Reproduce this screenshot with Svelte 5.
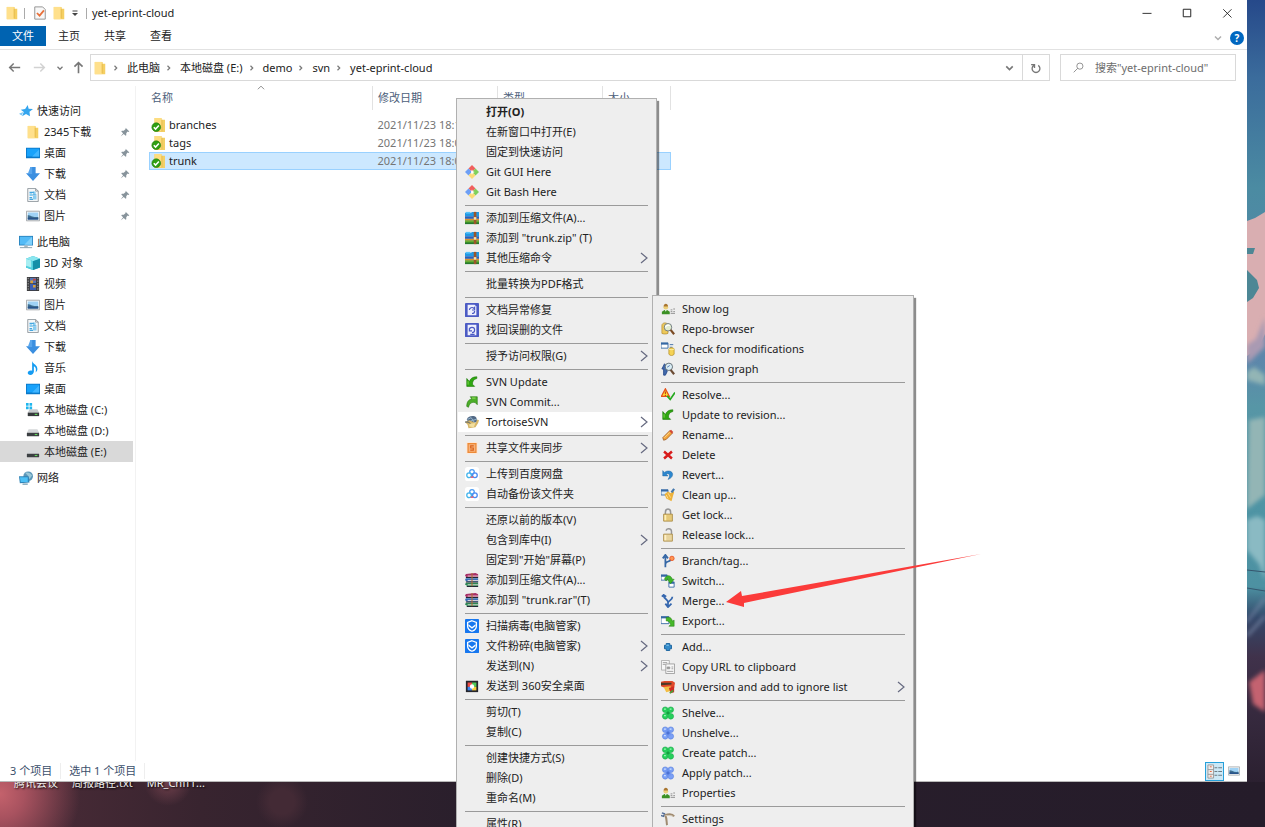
<script>
  // 16x16 glyphs, keyed by name
  const icons = {
    folder: '<path d="M2 1h9v2h3v12H2z" fill="#f5cf62"/><path d="M2 1h8v14H2z" fill="#ffe08c"/><path d="M10 3h1v11h-1z" fill="#e6ba4e"/>',
    svnFolder: '<path d="M4 0h8v2h4v14H4z" fill="#f3cf66"/><path d="M4 0h8v15H4z" fill="#fddd80"/><path d="M12 2h1v13h-1z" fill="#e6ba4e"/><circle cx="6" cy="10.500" r="5" fill="#2f9e12" stroke="#247d0d" stroke-width=".7"/><path d="M3.200 10.500l2 2.200 3.800-4.200" fill="none" stroke="#fff" stroke-width="1.700"/>',
    props: '<path d="M2 1h9l3 3v11H2z" fill="#f8f8f8" stroke="#8a8a8a"/><path d="M4.500 8l3 3 5-6" fill="none" stroke="#e8703a" stroke-width="2"/>',
    star: '<path d="M10 1l1 4.500 5 .3-4 3 .5 5.200-4.500-2.600L3.500 14l2-4.800L2 6.500l5-.7z" fill="#34a5ee"/><path d="M0 11l5-2-2 4z" fill="#7ac6f5"/>',
    desktop: '<path d="M0 2h16v12H0z" fill="#0a78c8"/><path d="M1 3h14v9H1z" fill="#18a2fb"/><path d="M7 12l8-8v8z" fill="#40b5ff"/>',
    download: '<path d="M5 0h6v7h5l-8 9-8-9h5z" fill="#3b8fe0"/><path d="M5 0h2v8H2z" fill="#58a5ec"/>',
    document: '<path d="M2 .5h9l3 3v12H2z" fill="#f5f7f8" stroke="#8c9499"/><path d="M11 .5v3h3" fill="none" stroke="#8c9499"/><path d="M4 6h3v3H4zM8 4h3v4H8zM8 9h4v4H8z" fill="#8acdf0"/><path d="M4 5h5M7 8h5M4 11h3M4 13h4" stroke="#46a6df" stroke-width="1.300"/>',
    picture: '<path d="M.5 2.500h15v11H.5z" fill="#f7f7f7" stroke="#9ba1a5"/><path d="M2 4h12v8H2z" fill="#9fd2f5"/><path d="M2 7c4 0 5 3 12 2v3H2z" fill="#3f6f8f"/><path d="M2 10c4-1 7 1 12 0v2H2z" fill="#28538a"/>',
    pc: '<path d="M0 1h16v11H0z" fill="#2882bd"/><path d="M1 2h14v9H1z" fill="#53bbf6"/><path d="M6 11L15 2v9z" fill="#7fd0fb"/><path d="M6 12h4v2H6z" fill="#a9b6bd"/><path d="M1 14h14v1H1z" fill="#7d97a5"/>',
    cube: '<path d="M8 0l8 3v10l-8 3-8-3V3z" fill="#27b5cd"/><path d="M8 0l8 3-8 3-8-3z" fill="#8be6ef"/><path d="M0 3l8 3v10l-8-3z" fill="#51cfdd"/><path d="M0 3l6 2v8l-6-2z" fill="#a8eef2"/><path d="M16 3L8 6v10l8-3z" fill="#1590a8"/>',
    film: '<path d="M1 0h14v16H1z" fill="#3d3d3f"/><path d="M2.500 1v14M13.500 1v14" stroke="#b5b5b5" stroke-dasharray="1.500 1.500"/><path d="M4.500 1h7v6h-7z" fill="#5677b8"/><path d="M4.500 8h7v7h-7z" fill="#3c5fb1"/><path d="M5 4h3v3H5zM8 9h3v3H8z" fill="#d8a13c"/><path d="M8 2h3v2H8z" fill="#ca4335"/>',
    music: '<path d="M7 0c1 4 6 4 6 9 0 2-1 3-2 4 1-4 0-6-2-7v6c0 2-2 4-4 4s-3-1-3-2.500S4 10 7 11z" fill="#159cf2"/>',
    drive: '<path d="M3 6h10l2 4H1z" fill="#d4d7d9"/><path d="M1 10h14v4H1z" fill="#3b3f42"/><path d="M10 12h3" stroke="#61d65c" stroke-width="1.300"/>',
    driveC: '<path d="M4 7h9l2 4H2z" fill="#c6cacc"/><path d="M2 11h13v4H2z" fill="#36393c"/><path d="M10 13h3" stroke="#61d65c" stroke-width="1.300"/><path d="M0 0h3v3H0zM4 0h3v3H4zM0 4h3v3H0zM4 4h3v3H4z" fill="#1fb6ee"/>',
    network: '<circle cx="10.500" cy="6" r="5.500" fill="#5c97b8"/><path d="M7 2c3-1 6 0 8 3l-3 4-2-4z" fill="#9ac7d7"/><path d="M0 6h11l1 7-11 1z" fill="#2f84b8"/><path d="M1 7h9v5.500H2z" fill="#4dc0f5"/><path d="M4 15h6" stroke="#6a98b0" stroke-width="1.400"/>',
    git: '<path d="M8 0l4 4-4 4-4-4z" fill="#f0605c"/><path d="M4 4l4 4-4 4-4-4z" fill="#6d9ff5"/><path d="M12 4l4 4-4 4-4-4z" fill="#7fd05c"/><path d="M8 8l4 4-4 4-4-4z" fill="#f9db76"/><path d="M8 5l1 2 2 1-2 1-1 2-1-2V7z" fill="#fff"/>',
    zip: '<path d="M0 2h7l1-1h8v5H0z" fill="#2199e4"/><path d="M1 1h5v2H1z" fill="#55c2fa"/><path d="M0 6h16v3H0z" fill="#2b62b9"/><path d="M0 9h16v2H0z" fill="#e0912d"/><path d="M0 11h16v4H0z" fill="#247a2c"/><path d="M0 11h16v2H0z" fill="#66ad30"/><path d="M10 1h3v14h-3z" fill="#9a562b"/><path d="M10 7h3v3h-3z" fill="#ffe3a8"/>',
    repair: '<rect width="16" height="16" rx="1" fill="#4c5bc4"/><path d="M3 2h8l2 2v10H3z" fill="#eef0fd"/><path d="M5 8a3 3 0 0 1 5-2l1-1v3H8M11 9a3 3 0 0 1-3 3" fill="none" stroke="#4c5bc4" stroke-width="1.300"/>',
    recover: '<rect width="16" height="16" rx="1" fill="#4c5bc4"/><path d="M3 2h10v12H3z" fill="#eef0fd"/><path d="M5 8a3 3 0 1 1 3 3M5 6v3h3M6 13h5" fill="none" stroke="#4c5bc4" stroke-width="1.300"/>',
    update: '<path d="M2 4v9h9L8.500 10.500C8.500 7 10 5 13.500 4V2C9 2 6 4 5 7.500z" fill="#30a711" stroke="#187607" stroke-width=".7"/><path d="M3.500 7v4" stroke="#85df55"/>',
    commit: '<path d="M2 13C2 8 4 5 8 4.500L6 2h8v9l-2.500-2.500C7 8 5 10 4 14z" fill="#4cae29" stroke="#217709" stroke-width=".7"/><path d="M8 3.500h4" stroke="#a4ed66"/>',
    tortoise: '<path d="M2 5c2-4 8-5 11-2l1 5-9 2z" fill="#526986"/><path d="M3 5l4-2 2 3 4-1M6 7l3-1 2 3" stroke="#9ec1d7" fill="none"/><path d="M0 8l5-2 7 3 2-4 2 1-1 3-3 5-8 1-1-4z" fill="#d6b668"/><path d="M5 10l7-1-2 5-5-1z" fill="#f3df9e"/><path d="M0 8l4 0 2 2" stroke="#38495f" fill="none"/>',
    share: '<rect x="1" y="1" width="14" height="14" rx="2" fill="#fbe9dc"/><path d="M3.500 3h9v10h-9z" fill="#f6b27c" stroke="#ed8a36" stroke-width="1.500"/><path d="M10 5.500H6.500V8H9.500v2.500H6" fill="none" stroke="#d9621a" stroke-width="1.300"/>',
    baidu: '<rect width="16" height="16" rx="3" fill="#fff"/><circle cx="8" cy="5.500" r="2.600" fill="none" stroke="#4b9df3" stroke-width="1.500"/><circle cx="4.700" cy="9.500" r="2.700" fill="none" stroke="#43b5ec" stroke-width="1.500"/><circle cx="11.300" cy="9.500" r="2.700" fill="none" stroke="#4b8cf3" stroke-width="1.500"/><path d="M6.500 11c1 1 2 1 3 0" stroke="#ef5362" stroke-width="1.500" fill="none"/>',
    rar: '<path d="M1 1l11-1 3 1.500V5H2L0 3z" fill="#a82f66"/><path d="M1 6h14v4H2L0 8z" fill="#366bb4"/><path d="M1 11h14v4H3l-3-2z" fill="#2d8754"/><path d="M3 3.500h12M3 8.500h12M3 13.500h12" stroke="#f4e6e6"/><path d="M1 5.200h14M1 10.200h14M2 15.400h13" stroke="#202733" stroke-width="1.200"/><path d="M7 0h2v15H7z" fill="#ad6b37" opacity=".6"/>',
    shield: '<rect width="16" height="16" rx="1" fill="#1777ef"/><path d="M8 2l5 2v4c0 3-2 5-5 6-3-1-5-3-5-6V4z" fill="none" stroke="#fff" stroke-width="1.500"/><path d="M4 6l4 3 4-3v2l-4 3-4-3z" fill="#fff"/>',
    desk360: '<path d="M1 2h14v13H1z" fill="#25252c"/><path d="M3 4h5v5H3z" fill="#f04a45"/><path d="M8 4h5v5H8z" fill="#50c856"/><path d="M3 9h5v4H3z" fill="#3c86f2"/><path d="M8 9h5v4H8z" fill="#f6cc3a"/><circle cx="8" cy="8.500" r="2.500" fill="#fff"/>',
    user: '<circle cx="5.500" cy="6" r="2.700" fill="#ecd07a"/><path d="M3 5c0-4 5-4 5 0z" fill="#a97630"/><path d="M1 14v-3l3-2h3l3 2v3z" fill="#3c9125"/><path d="M4.500 9l1 2 1-2z" fill="#fff"/><path d="M11 9h2M14 8h2M11 11h2M14 11h2M11 13h5" stroke="#888"/>',
    repo: '<path d="M1 4c0-4 7-4 7 0v9c-2 1-5 1-7 0z" fill="#edc95b" stroke="#a98222" stroke-width=".7"/><circle cx="8" cy="6" r="4.300" fill="#e3eccf" stroke="#68737b"/><path d="M11 9l4 5" stroke="#7b4b24" stroke-width="2.500"/><path d="M5 6c1-2 3-3 5-2" stroke="#fff" stroke-width="1.500" fill="none"/>',
    check: '<path d="M0 1h8v6H0z" fill="#fff" stroke="#3568a4"/><path d="M0 1h8v2H0z" fill="#3568a4"/><path d="M10 3h4M10 6h3" stroke="#3568a4"/><path d="M9 8c0-2 6-2 6 0v6c-2 2-4 2-6 0z" fill="#f5d255" stroke="#b28b21" stroke-width=".8"/><path d="M9 8c2 1 4 1 6 0" fill="none" stroke="#fff5b7"/>',
    graph: '<path d="M3 15V8H1l3-6 3 4v5l-2 4z" fill="#426aac" stroke="#284b8b"/><circle cx="9" cy="5.500" r="4.200" fill="#d9edf5" stroke="#58636b"/><path d="M7 6l3-2" stroke="#426aac"/><path d="M11 9l4 5" stroke="#6b4b34" stroke-width="2.500"/>',
    resolve: '<path d="M5 1l4.500 8.500H.5z" fill="#ffde32" stroke="#e75018" stroke-width="1.500"/><path d="M5 4v3M5 8v1" stroke="#bf3515" stroke-width="1.200"/><path d="M7 9l3.500 4L16 5" fill="none" stroke="#24aa1e" stroke-width="2"/>',
    rename: '<path d="M2 11L10 3l3 3-7 7-3 1z" fill="#f3a43b" stroke="#965522" stroke-width=".8"/><path d="M9.500 3.500l2-1.500 2.500 2.500-1.500 2z" fill="#d34736"/><path d="M4 11l6-6" stroke="#ffe096"/>',
    remove: '<path d="M3.500 4l9 8M12.500 4l-9 8" stroke="#d81b1b" stroke-width="2.800"/>',
    revert: '<path d="M2 3v6h6L6 7c4-2 5 2 2 6 7-2 7-10 0-9.500C6 3.500 5 4.500 4 5z" fill="#2c87cf" stroke="#1f65a2" stroke-width=".6"/>',
    clean: '<path d="M0 2h8v6H0z" fill="#dbeaf5" stroke="#3568a4"/><path d="M0 2h8v2H0z" fill="#3568a4"/><path d="M14 3l-3 3-3-2-4 3 2 5 6 3 2-7 1-3z" fill="#edb23b"/><path d="M6 8l2 4M8 6l3 5" stroke="#ffe099"/><path d="M12 5l3-4" stroke="#4478ad" stroke-width="2.500"/>',
    lock: '<path d="M5 8V5c0-5 6-5 6 0v3" fill="none" stroke="#969696" stroke-width="1.700"/><path d="M3 7h10v8H3z" fill="#e6c979" stroke="#ab8d47"/><path d="M5 8v6" stroke="#fff0b6" stroke-width="2"/>',
    unlock: '<path d="M12 8V4c0-4-6-4-6-1" fill="none" stroke="#969696" stroke-width="1.700"/><path d="M3 7h10v8H3z" fill="#e8d49e" stroke="#ab8d47"/><path d="M5 8v6" stroke="#fff0c6" stroke-width="2"/>',
    branch: '<path d="M5 15V3M2 5l3-4 3 4M5 12c0-5 6-2 6-6" fill="none" stroke="#3567a5" stroke-width="2"/><circle cx="12.500" cy="5" r="2.500" fill="#fb9755" stroke="#ec5320"/>',
    switch: '<path d="M0 1h7v6H0zM9 9h6v6H9z" fill="#fff" stroke="#3568a4"/><path d="M0 1h7v2H0zM9 9h6v2H9z" fill="#3568a4"/><path d="M4 6c1-5 7-6 9 0h2l-4 5-4-5h2c-1-2-2-1-3 2z" fill="#3eb629" stroke="#247c17" stroke-width=".6"/>',
    merge: '<path d="M3 1c0 5 4 4 5 8v5M13 3c0 4-4 4-5 7M5 11l3 4 4-4M1 3l2-2 3 2" fill="none" stroke="#3567ae" stroke-width="2"/>',
    export: '<path d="M0 3h9v8H0z" fill="#fff" stroke="#3568a4"/><path d="M0 3h9v2H0z" fill="#3568a4"/><path d="M6 4c5-1 6 1 7 4l2-1v7H9l2-2C9 8 8 8 6 8z" fill="#46b829" stroke="#247c17" stroke-width=".6"/>',
    add: '<path d="M6 4h4v2h2v4h-2v2H6v-2H4V6h2z" fill="#348bc9" stroke="#155f9b"/><path d="M6 6h3" stroke="#8dceef"/>',
    copy: '<path d="M.5.5h9v11h-9z" fill="#f7f7f7" stroke="#aaa"/><path d="M5.500 4.500h10v11h-10z" fill="#f7f7f7" stroke="#999"/><path d="M2 3h5M2 5h3M7 8h3v2H7zM12 8h2M12 10h2M7 13h7" stroke="#999" fill="#999"/>',
    ignore: '<path d="M0 2l4-1h9l3 2-1 6-8 1-7-3z" fill="#e0492a"/><path d="M0 3h12v2L0 6z" fill="#4c3a28"/><path d="M3 8l8-1 2 5-7 2z" fill="#f2bf43"/><path d="M9 9l6-2v7l-4 1z" fill="#d22b24"/><path d="M10 15l4-3" stroke="#49a43b" stroke-width="2"/>',
    shelve: '<g fill="#27cf5c" stroke="#17a543" stroke-width=".6"><circle cx="4.800" cy="4.200" r="3.200"/><circle cx="11.200" cy="4.200" r="3.200"/><circle cx="4.800" cy="11.800" r="3.200"/><circle cx="11.200" cy="11.800" r="3.200"/></g><path d="M5 5h6v6H5z" fill="#27cf5c"/><path d="M8 6v4M6 8h4" stroke="#0f8a34"/><path d="M3.500 3.500h2M10 3.500h2M3.500 11h2" stroke="#9dffb8" stroke-width="1.500"/>',
    unshelve: '<g fill="#7ba0f5" stroke="#5078dc" stroke-width=".6"><circle cx="4.800" cy="4.200" r="3.200"/><circle cx="11.200" cy="4.200" r="3.200"/><circle cx="4.800" cy="11.800" r="3.200"/><circle cx="11.200" cy="11.800" r="3.200"/></g><path d="M5 5h6v6H5z" fill="#6e94f0"/><path d="M8 6v4M6 8h4" stroke="#3c62c8"/><path d="M3.500 3.500h2M10 3.500h2M3.500 11h2" stroke="#d0e2ff" stroke-width="1.500"/>',
    settings: '<path d="M1 1l3 1-1 3-3-1" fill="none" stroke="#536e98" stroke-width="1.600"/><path d="M4 4c5-2 9-2 11 1M5 4c2 4 1 8 2 11" fill="none" stroke="#a08b70" stroke-width="2.300"/><path d="M5 4c4 0 7 0 9 1" fill="none" stroke="#d5cab8"/>',
    pin: '<path d="M9 1l6 6-2 1-1-1-2 3v3l-1 1-3-3-5 4 4-5-3-3 1-1h3l3-3z" fill="#87939b"/>',
    back: '<path d="M7 3L2 8l5 5M2 8h13" fill="none" stroke="#777" stroke-width="1.800"/>',
    forward: '<path d="M9 3l5 5-5 5M14 8H1" fill="none" stroke="#d2d2d2" stroke-width="1.800"/>',
    up: '<path d="M3 7l5-5 5 5M8 2v13" fill="none" stroke="#777" stroke-width="2"/>',
    down: '<path d="M4 6l4 4 4-4" fill="none" stroke="#777" stroke-width="2"/>',
    right: '<path d="M6 5l3 3-3 3" fill="none" stroke="#777" stroke-width="1.600"/>',
    sort: '<path d="M3 10l5-5 5 5" fill="none" stroke="#888" stroke-width="1.500"/>',
    refresh: '<path d="M5 4.500a5.200 5.200 0 1 0 6 0M1.500 3.500H6V8" fill="none" stroke="#777" stroke-width="1.800"/>',
    search: '<circle cx="10" cy="6" r="4.500" fill="none" stroke="#888" stroke-width="1.300"/><path d="M7 9l-6 6" stroke="#888" stroke-width="1.300"/>',
    quick: '<path d="M3 4h10" stroke="#444" stroke-width="2"/><path d="M2 8h12l-6 6z" fill="#444"/>',
    min: '<path d="M2 8.500h12" stroke="#222" stroke-width="1.200"/>',
    max: '<path d="M3 3h10v10H3z" fill="none" stroke="#222" stroke-width="1.300"/>',
    close: '<path d="M3 3l11 11M14 3L3 14" stroke="#222" stroke-width="1.200"/>',
    details: '<path d="M1 1h6v14H1z" fill="#eee" stroke="#999"/><path d="M1 6h6M1 11h6" stroke="#999"/><path d="M3 3h2M3 8h2M3 13h2" stroke="#e4633c"/><path d="M8 4h3M12 4h4M8 8h3M12 8h4M8 12h3M12 12h4" stroke="#66757d"/>',
  };

  const ribbon = ['主页', '共享', '查看'];
  const crumbs = ['此电脑', '本地磁盘 (E:)', 'demo', 'svn', 'yet-eprint-cloud'];

  const tree = [
    {
      name: '快速访问', icon: 'star', pinned: true,
      items: [
        ['folder', '2345下载'], ['desktop', '桌面'], ['download', '下载'],
        ['document', '文档'], ['picture', '图片'],
      ],
    },
    {
      name: '此电脑', icon: 'pc',
      items: [
        ['cube', '3D 对象'], ['film', '视频'], ['picture', '图片'], ['document', '文档'],
        ['download', '下载'], ['music', '音乐'], ['desktop', '桌面'],
        ['driveC', '本地磁盘 (C:)'], ['drive', '本地磁盘 (D:)'], ['drive', '本地磁盘 (E:)'],
      ],
    },
    { name: '网络', icon: 'network', items: [] },
  ];

  const files = [
    { name: 'branches', date: '2021/11/23 18:10' },
    { name: 'tags', date: '2021/11/23 18:08' },
    { name: 'trunk', date: '2021/11/23 18:08' },
  ];

  // [icon, label, has submenu]; one array per separated group
  const mainMenu = [
    [
      ['', '打开(O)'], ['', '在新窗口中打开(E)'], ['', '固定到快速访问'],
      ['git', 'Git GUI Here'], ['git', 'Git Bash Here'],
    ],
    [['zip', '添加到压缩文件(A)...'], ['zip', '添加到 "trunk.zip" (T)'], ['zip', '其他压缩命令', true]],
    [['', '批量转换为PDF格式']],
    [['repair', '文档异常修复'], ['recover', '找回误删的文件']],
    [['', '授予访问权限(G)', true]],
    [['update', 'SVN Update'], ['commit', 'SVN Commit...'], ['tortoise', 'TortoiseSVN', true]],
    [['share', '共享文件夹同步', true]],
    [['baidu', '上传到百度网盘'], ['baidu', '自动备份该文件夹']],
    [
      ['', '还原以前的版本(V)'], ['', '包含到库中(I)', true], ['', '固定到"开始"屏幕(P)'],
      ['rar', '添加到压缩文件(A)...'], ['rar', '添加到 "trunk.rar"(T)'],
    ],
    [
      ['shield', '扫描病毒(电脑管家)'], ['shield', '文件粉碎(电脑管家)', true],
      ['', '发送到(N)', true], ['desk360', '发送到 360安全桌面'],
    ],
    [['', '剪切(T)'], ['', '复制(C)']],
    [['', '创建快捷方式(S)'], ['', '删除(D)'], ['', '重命名(M)']],
    [['', '属性(R)']],
  ];

  const svnMenu = [
    [['user', 'Show log'], ['repo', 'Repo-browser'], ['check', 'Check for modifications'], ['graph', 'Revision graph']],
    [
      ['resolve', 'Resolve...'], ['update', 'Update to revision...'], ['rename', 'Rename...'],
      ['remove', 'Delete'], ['revert', 'Revert...'], ['clean', 'Clean up...'],
      ['lock', 'Get lock...'], ['unlock', 'Release lock...'],
    ],
    [['branch', 'Branch/tag...'], ['switch', 'Switch...'], ['merge', 'Merge...'], ['export', 'Export...']],
    [['add', 'Add...'], ['copy', 'Copy URL to clipboard'], ['ignore', 'Unversion and add to ignore list', true]],
    [
      ['shelve', 'Shelve...'], ['unshelve', 'Unshelve...'], ['shelve', 'Create patch...'],
      ['unshelve', 'Apply patch...'], ['user', 'Properties'],
    ],
    [['settings', 'Settings']],
  ];

  let location = $state('本地磁盘 (E:)');
  let selected = $state('trunk');
  let hovered = $state('TortoiseSVN');
  let query = $state('');
</script>

{#snippet icon(name)}
  <svg class="icon" viewBox="0 0 16 16" aria-hidden="true">{@html icons[name] ?? ''}</svg>
{/snippet}

{#snippet menu(groups, name)}
  <div class="menu {name}" role="menu">
    {#each groups as group}
      <div class="group">
        {#each group as [ico, label, more]}
          <button
            class="item"
            class:default={label === '打开(O)'}
            class:active={label === hovered}
            role="menuitem"
            onmouseenter={() => { if (name === 'main') hovered = label; }}
          >
            {@render icon(ico)}
            <span>{label}</span>
            {#if more}
              <svg class="more" viewBox="0 0 8 12" aria-hidden="true"><path d="M1 1l6 5-6 5" /></svg>
            {/if}
          </button>
        {/each}
      </div>
    {/each}
  </div>
{/snippet}

<div class="screen">
  <div class="window">
    <header class="titlebar">
      {@render icon('folder')}
      <span class="bar"></span>
      <button class="plain first" aria-label="属性">{@render icon('props')}</button>
      <button class="plain" aria-label="新建文件夹">{@render icon('folder')}</button>
      <button class="plain quick" aria-label="自定义快速访问工具栏">{@render icon('quick')}</button>
      <span class="bar"></span>
      <span class="title">yet-eprint-cloud</span>
      <div class="caption">
        <button class="plain" aria-label="最小化">{@render icon('min')}</button>
        <button class="plain" aria-label="最大化">{@render icon('max')}</button>
        <button class="plain" aria-label="关闭">{@render icon('close')}</button>
      </div>
    </header>

    <nav class="ribbon">
      <button class="tab file">文件</button>
      {#each ribbon as tab}
        <button class="tab">{tab}</button>
      {/each}
      <div class="help">
        <button class="plain faint" aria-label="展开功能区">{@render icon('down')}</button>
        <button class="question">?</button>
      </div>
    </nav>

    <div class="toolbar">
      <div class="history">
        <button class="plain" aria-label="后退">{@render icon('back')}</button>
        <button class="plain" aria-label="前进">{@render icon('forward')}</button>
        <button class="plain recent" aria-label="最近浏览的位置">{@render icon('down')}</button>
        <button class="plain" aria-label="上移">{@render icon('up')}</button>
      </div>
      <div class="address">
        {@render icon('folder')}
        {#each crumbs as crumb}
          <span class="sep">{@render icon('right')}</span>
          <button class="crumb">{crumb}</button>
        {/each}
        <button class="plain open" aria-label="以前的位置">{@render icon('down')}</button>
        <button class="plain refresh" aria-label="刷新">{@render icon('refresh')}</button>
      </div>
      <label class="search">
        {@render icon('search')}
        <input type="text" aria-label="搜索" placeholder={'搜索"yet-eprint-cloud"'} bind:value={query} />
      </label>
    </div>

    <div class="body">
      <aside class="tree">
        {#each tree as node}
          <div class="branch">
            <button class="node root">{@render icon(node.icon)}<span>{node.name}</span></button>
            {#each node.items as [ico, label]}
              <button class="node" class:current={label === location} onclick={() => (location = label)}>
                {@render icon(ico)}
                <span>{label}</span>
                {#if node.pinned}<span class="pin">{@render icon('pin')}</span>{/if}
              </button>
            {/each}
          </div>
        {/each}
      </aside>

      <main class="list">
        <table>
          <thead>
            <tr>
              <th class="name">名称<span class="sort">{@render icon('sort')}</span></th>
              <th class="date">修改日期</th>
              <th class="type">类型</th>
              <th class="size">大小</th>
            </tr>
          </thead>
          <tbody>
            {#each files as file}
              <tr class:selected={file.name === selected} onclick={() => (selected = file.name)}>
                <td><div class="file-name">{@render icon('svnFolder')}{file.name}</div></td>
                <td class="muted">{file.date}</td>
                <td></td>
                <td></td>
              </tr>
            {/each}
          </tbody>
        </table>
      </main>
    </div>

    <footer class="status">
      <span>3 个项目</span>
      <span>选中 1 个项目</span>
      <div class="views">
        <button class="plain view on" aria-label="详细信息">{@render icon('details')}</button>
        <button class="plain view" aria-label="大图标">{@render icon('picture')}</button>
      </div>
    </footer>
  </div>

  <svg class="sky" viewBox="0 0 18 782" preserveAspectRatio="none" aria-hidden="true">
    <defs>
      <linearGradient id="sky" x1="0" y1="0" x2="0" y2="1">
        <stop offset="0" stop-color="#26498a" />
        <stop offset=".1" stop-color="#3b6c9c" />
        <stop offset=".24" stop-color="#4b8ba2" />
        <stop offset=".46" stop-color="#5d87ab" />
        <stop offset=".52" stop-color="#5796a6" />
        <stop offset=".66" stop-color="#4e94a4" />
        <stop offset=".75" stop-color="#4d91a2" />
        <stop offset=".79" stop-color="#33486a" />
        <stop offset=".84" stop-color="#40324b" />
        <stop offset="1" stop-color="#2b2030" />
      </linearGradient>
      <filter id="soft" x="-20%" y="-20%" width="140%" height="140%"><feGaussianBlur stdDeviation="2" /></filter>
    </defs>
    <path d="M0 0h18v782H0z" fill="url(#sky)" />
    <path d="M0 221l8-3 10-6v122l-6 13-12 9z" fill="#d9aeb1" />
    <path d="M0 270l10 10 2 8-6 10-6 4zM0 248h8l-2 6H0z" fill="#4d8795" />
    <path d="M0 345l9-6 9-22v30L0 364z" fill="#a99ab2" filter="url(#soft)" />
    <path d="M0 372l7-5 11 8v10L0 380zM2 420l16-3v78l-18 14z" fill="#93b5b5" filter="url(#soft)" />
    <path d="M0 520l10-4 8 4v60l-6-16-12-14z" fill="#8abac3" filter="url(#soft)" />
    <path d="M0 570l18 2M0 588l18 3" stroke="#35556d" />
    <path d="M0 622l18-24M0 636l18-20" stroke="#7b8aa8" stroke-width="2" filter="url(#soft)" />
    <path d="M2 682l16-12v42l-12-8z" fill="#c4626f" filter="url(#soft)" />
  </svg>

  <div class="desktop">
    <span>腾讯会议</span>
    <span>周报路径.txt</span>
    <span>MR_Chff1...</span>
  </div>

  {@render menu(mainMenu, 'main')}
  {@render menu(svnMenu, 'svn')}

  <svg class="pointer" viewBox="0 0 256 53" aria-hidden="true">
    <path d="M0 48L15 37l1 5L255 0 18 49v4z" fill="#fb3b3a" />
  </svg>
</div>

<style>
:global(body) { margin: 0; }
.screen {
  position: relative;
  display: grid;
  grid-template-columns: 1fr 18px;
  grid-template-rows: 1fr 45px;
  height: 100vh;
  overflow: hidden;
  background: #2c202e;
  font-family: "Noto Sans", "Noto Sans CJK SC", sans-serif;
  font-size: 11px;
  line-height: 16px;
  color: #222;
}
button, input { font: inherit; color: inherit; }
button {
  display: flex;
  align-items: center;
  border: 0;
  padding: 0;
  background: none;
  white-space: nowrap;
}
.icon { width: 14px; height: 14px; flex: none; display: block; }
.plain:hover { background: #e5f1fb; }

.window {
  position: relative;
  z-index: 1;
  display: flex;
  flex-direction: column;
  min-width: 0;
  background: #fff;
  border-bottom: 1px solid #b9b9b9;
  box-sizing: border-box;
}
.sky { width: 100%; height: 100%; display: block; }

.titlebar { display: flex; align-items: center; height: 26px; padding-left: 5px; gap: 5px; }
.bar { width: 1px; height: 11px; background: #aaa; }
.first { margin-left: 3px; }
.quick { margin-right: 2px; }
.quick .icon { width: 8px; height: 8px; }
.caption { display: flex; margin-left: auto; }
.caption .plain { width: 40px; height: 26px; justify-content: center; }
.caption .icon { width: 12px; height: 12px; }

.ribbon { display: flex; height: 23px; border-bottom: 1px solid #e2e2e2; }
.tab { height: 20px; width: 46px; justify-content: center; }
.file { background: #0063b1; color: #fff; }
.help { display: flex; align-items: center; gap: 6px; margin-left: auto; padding-right: 3px; }
.faint { opacity: 0.6; }
.faint .icon { width: 12px; height: 12px; }
.question {
  width: 14px;
  height: 14px;
  justify-content: center;
  border-radius: 50%;
  background: #0067c0;
  color: #fff;
  font-size: 10px;
  font-weight: bold;
}

.toolbar { display: flex; padding: 4px 11px 0 0; height: 27px; }
.history { display: flex; align-items: center; width: 83px; padding-left: 8px; gap: 12px; box-sizing: border-box; }
.history .icon { width: 13px; height: 13px; }
.recent { margin: 0 -5px 0 -3px; }
.history .recent .icon { width: 10px; height: 10px; }
.address {
  display: flex;
  align-items: center;
  flex: 1;
  margin-left: 7px;
  padding-left: 2px;
  border: 1px solid #d9d9d9;
  box-sizing: border-box;
}
.sep { padding: 0 5px 0 3px; }
.sep .icon { width: 12px; height: 12px; }
.open { margin-left: auto; padding: 0 6px; }
.open .icon { width: 13px; }
.refresh { align-self: stretch; padding: 0 7px; border-left: 1px solid #d9d9d9; }
.refresh .icon { width: 12px; height: 12px; }
.search {
  display: flex;
  align-items: center;
  gap: 11px;
  width: 176px;
  margin-left: 10px;
  padding-left: 12px;
  border: 1px solid #d9d9d9;
  box-sizing: border-box;
}
.search .icon { width: 11px; height: 11px; }
.search input { flex: 1; min-width: 0; border: 0; padding: 0; outline: 0; background: none; }
.search input::placeholder { color: #6d6d6d; opacity: 1; }

.body { display: flex; flex: 1; min-height: 0; padding-top: 5px; }
.tree { width: 135px; padding-top: 14px; border-right: 1px solid #f2f2f2; }
.branch { margin-bottom: 5px; }
.node {
  width: 133px;
  height: 21px;
  padding: 0 3px 0 26px;
  gap: 4px;
  box-sizing: border-box;
}
.root { padding-left: 19px; }
.node.current { background: #d9d9d9; }
.pin { margin-left: auto; }
.pin .icon { width: 10px; height: 10px; }

.list { flex: 1; min-width: 0; padding-left: 13px; }
table { border-collapse: collapse; table-layout: fixed; width: 522px; }
th {
  position: relative;
  height: 24px;
  padding: 0 0 0 5px;
  border-right: 1px solid #e2e2e2;
  color: #4c607a;
  font-weight: normal;
  text-align: left;
}
th.name { width: 221px; padding-left: 2px; }
th.date { width: 119px; }
th.type { width: 99px; }
.sort { position: absolute; top: -3px; left: 50%; margin-left: -5px; }
.sort .icon { width: 10px; height: 10px; }
tbody::before { content: ""; display: block; height: 6px; }
td { height: 18px; padding: 0 0 0 5px; }
td:first-child { padding-left: 2px; }
td.muted { color: #757575; white-space: nowrap; }
.file-name { display: flex; align-items: center; gap: 4px; }
tr.selected { background: #cce8ff; box-shadow: inset 0 0 0 1px #99d1ff; }

.status {
  display: flex;
  align-items: center;
  height: 20px;
  padding-left: 10px;
  color: #3b4f6b;
}
.status > span { padding-right: 8px; margin-right: 8px; border-right: 1px solid #eee; }
.views { display: flex; margin-left: auto; padding-right: 4px; }
.view { width: 19px; height: 19px; justify-content: center; box-sizing: border-box; }
.view.on { background: #cce8f6; border: 1px solid #26a0da; }
.view .icon { width: 12px; height: 12px; }
.view.on .icon { width: 15px; height: 15px; }

.desktop {
  grid-column: 1 / 3;
  display: flex;
  align-items: flex-start;
  gap: 14px;
  padding-left: 14px;
  background:
    radial-gradient(circle at 0 12px, #c4626c 0, #a8525f 24px, transparent 80px),
    radial-gradient(circle at 168px 0, #70404c 0, transparent 24px),
    radial-gradient(circle at 282px 20px, #432a35 12px, transparent 26px),
    linear-gradient(90deg, #4c2c38 0, #38242f 200px, #2a1f2c 460px, #251c2a 100%);
  color: #eee;
}
.desktop span { margin-top: -7px; text-shadow: 1px 1px 2px #000; }

.menu {
  position: absolute;
  padding: 3px 1px;
  background: #eee;
  border: 1px solid #b0b0b0;
  box-shadow: 2px 3px 1px rgba(0, 0, 0, 0.45);
  box-sizing: border-box;
  z-index: 2;
}
.main { left: 456px; top: 98px; width: 201px; }
.svn { left: 652px; top: 295px; width: 262px; z-index: 3; }
.group + .group::before {
  content: "";
  display: block;
  height: 1px;
  margin: 3px 7px 2px;
  background: #9a9a9a;
}
.item { width: 100%; height: 20px; padding: 0 7px; gap: 7px; box-sizing: border-box; }
.item.active { background: #fff; }
.svn .item:hover { background: #fff; }
.item.default { font-weight: bold; }
.more { width: 8px; height: 12px; margin-left: auto; fill: none; stroke: #666a80; stroke-width: 1.2; }

.pointer { position: absolute; left: 726px; top: 554px; width: 256px; height: 53px; z-index: 4; pointer-events: none; }
</style>
